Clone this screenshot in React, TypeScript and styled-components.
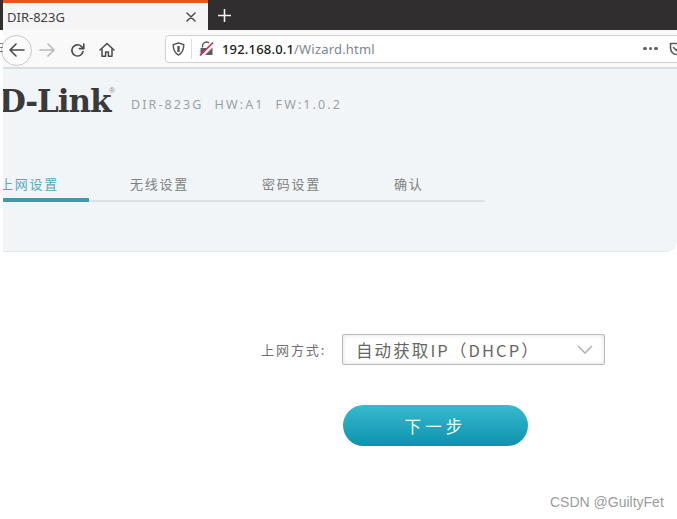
import React from "react";
import styled, { createGlobalStyle } from "styled-components";

const Global = createGlobalStyle`
  html, body { margin: 0; padding: 0; background: #fff; }
  body { width: 677px; height: 519px; overflow: hidden; font-family: "Noto Sans", "Noto Sans CJK SC", sans-serif; }
`;
const cjk = `"Noto Sans CJK SC", "Noto Sans", sans-serif`;

const Page = styled.div`
  position: relative;
  width: 677px;
  height: 519px;
  overflow: hidden;
  background: #fff;
  display: flex;
  flex-direction: column;
`;
const TabStrip = styled.div`
  height: 30px;
  flex: none;
  background: #302e2e;
  padding-left: 3px;
  display: flex;
  align-items: stretch;
`;
const ActiveTab = styled.div`
  width: 205px;
  background: #f5f5f5;
  border-top: 3px solid #e95420;
  box-sizing: border-box;
  display: flex;
  align-items: center;
  justify-content: space-between;
  padding: 0 12px 0 4px;
  font-size: 13px;
  color: #3f3f3f;
`;
const NewTab = styled.div`
  width: 32px;
  display: flex;
  align-items: center;
  justify-content: center;
`;
const Toolbar = styled.div`
  height: 39px;
  flex: none;
  box-sizing: border-box;
  background: #f9f9f9;
  border-bottom: 2px solid #dcdcdc;
  margin-left: 3px;
  padding: 4px 0;
  display: flex;
  align-items: center;
`;
const BackButton = styled.div`
  width: 31px;
  height: 31px;
  flex: none;
  margin-left: -2px;
  margin-top: 3px;
  border-radius: 50%;
  border: 1px solid #c9c9c9;
  background: #fbfbfb;
  box-sizing: border-box;
  display: flex;
  align-items: center;
  justify-content: center;
`;
const NavIcon = styled.div<{ $left: number }>`
  width: 18px;
  height: 18px;
  flex: none;
  margin-left: ${(p) => p.$left}px;
  margin-top: 3px;
  display: flex;
  align-items: center;
  justify-content: center;
`;
const AddressBar = styled.div`
  margin-left: 49px;
  flex: none;
  width: 530px;
  height: 28px;
  box-sizing: border-box;
  background: #fff;
  border: 1px solid #d0d0d0;
  border-radius: 4px;
  display: flex;
  align-items: center;
  padding-left: 6px;
`;
const Sep = styled.div`
  width: 1px;
  height: 20px;
  background: #dcdcdc;
  margin: 0 7px 0 6px;
`;
const Url = styled.div`
  margin-left: 8px;
  font-size: 13px;
  font-family: "Noto Sans", sans-serif;
  color: #7d8790;
  white-space: nowrap;
  width: 421px;
  letter-spacing: 0.18px;
`;
const Host = styled.span`
  color: #17181a;
  font-weight: 500;
`;
const Dots = styled.div`
  display: flex;
  gap: 2px;
`;
const Dot = styled.span`
  width: 3.5px;
  height: 3.5px;
  border-radius: 50%;
  background: #5f5f5f;
`;
const Panel = styled.div`
  height: 183px;
  flex: none;
  box-sizing: border-box;
  margin-left: 3px;
  background: #f1f5f8;
  border-bottom: 1px solid #e3e8ee;
  border-bottom-right-radius: 12px;
  overflow: hidden;
  display: flex;
  flex-direction: column;
`;
const Brand = styled.div`
  display: flex;
  align-items: baseline;
  height: 44px;
  margin-top: 12px;
`;
const Logo = styled.div`
  font-family: "DejaVu Serif", serif;
  font-weight: 700;
  font-size: 31px;
  line-height: 40px;
  letter-spacing: -1.1px;
  color: #3a3a3c;
  margin-left: -4px;
  width: 114px;
  flex: none;
  white-space: nowrap;
  position: relative;
`;
const Reg = styled.span`
  position: absolute;
  left: 110px;
  top: 6px;
  font-family: "Liberation Sans", sans-serif;
  font-size: 8px;
  line-height: 1;
  font-weight: 400;
  letter-spacing: 0;
  color: #8a8a8a;
`;
const Model = styled.div`
  margin-left: 18px;
  font-size: 12.5px;
  letter-spacing: 2.1px;
  word-spacing: 0.2px;
  color: #9b9fa3;
  white-space: pre;
  position: relative;
  top: -3px;
`;
const Steps = styled.div`
  margin-top: 53px;
  width: 482px;
  height: 24px;
  box-sizing: border-box;
  border-bottom: 2px solid #dde1e5;
  display: flex;
  position: relative;
`;
const Step = styled.div<{ $active?: boolean }>`
  width: 132px;
  flex: none;
  box-sizing: border-box;
  font-family: ${cjk};
  font-size: 13px;
  line-height: 12px;
  letter-spacing: 1.75px;
  color: ${(p) => (p.$active ? "#56a9bd" : "#808080")};
  white-space: nowrap;
`;
const FirstStep = styled(Step)`
  margin-left: -3px;
  width: 130px;
`;
const Progress = styled.div`
  position: absolute;
  left: 0;
  bottom: -2px;
  width: 86px;
  height: 4px;
  background: #4299ad;
`;
const Form = styled.div`
  margin-top: 82px;
  padding-left: 261px;
  display: flex;
  flex-direction: column;
`;
const FormRow = styled.div`
  display: flex;
  align-items: center;
`;
const Label = styled.div`
  width: 81px;
  flex: none;
  font-family: ${cjk};
  font-size: 13px;
  letter-spacing: 1.95px;
  color: #6f6f6f;
  white-space: nowrap;
`;
const Select = styled.div`
  width: 263px;
  height: 31px;
  box-sizing: border-box;
  border: 1.5px solid #b8b8b8;
  border-radius: 2px;
  box-shadow: inset 0 0 5px rgba(0, 0, 0, 0.12);
  background: #fff;
  display: flex;
  align-items: center;
  justify-content: space-between;
  padding: 0 11px 0 13px;
  font-family: ${cjk};
  font-size: 16.5px;
  letter-spacing: 2.1px;
  color: #666;
  white-space: nowrap;
`;
const NextButton = styled.button`
  margin: 40px 0 0 82px;
  width: 185px;
  height: 41px;
  border: 0;
  border-radius: 21px;
  background: linear-gradient(180deg, #38bbcd 0%, #0d92af 100%);
  color: #f3fbfc;
  font-family: ${cjk};
  font-size: 16.5px;
  letter-spacing: 4.2px;
  padding: 0;
`;
const Watermark = styled.div`
  position: absolute;
  left: 550px;
  top: 494px;
  font-family: "Liberation Sans", sans-serif;
  font-size: 14px;
  line-height: 16px;
  color: #9b9b9b;
`;
const EdgeGlyph = styled.div`
  position: absolute;
  left: -3px;
  top: 42px;
  width: 6px;
  font-size: 12px;
  line-height: 12px;
  color: #777;
  overflow: hidden;
`;

const stroke = { fill: "none", strokeLinecap: "round", strokeLinejoin: "round" } as const;

export default function App() {
  return (
    <Page>
      <Global />
      <TabStrip>
        <ActiveTab>
          <span>DIR-823G</span>
          <svg width="10" height="10" viewBox="0 0 10 10" {...stroke} stroke="#4a4a4a" strokeWidth="1.5">
            <path d="M1 1l8 8M9 1l-8 8" />
          </svg>
        </ActiveTab>
        <NewTab>
          <svg width="13" height="13" viewBox="0 0 13 13" stroke="#f2f2f2" strokeWidth="1.6" fill="none">
            <path d="M6.5 0v13M0 6.5h13" />
          </svg>
        </NewTab>
      </TabStrip>
      <Toolbar>
        <BackButton>
          <svg width="16" height="14" viewBox="0 0 16 14" {...stroke} stroke="#4a4a4a" strokeWidth="1.6">
            <path d="M15 7H1.5M7 1L1 7l6 6" />
          </svg>
        </BackButton>
        <NavIcon $left={6}>
          <svg width="16" height="14" viewBox="0 0 16 14" {...stroke} stroke="#b8b8b8" strokeWidth="1.5">
            <path d="M1 7h13.5M9 1l6 6-6 6" />
          </svg>
        </NavIcon>
        <NavIcon $left={12}>
          <svg width="15" height="15" viewBox="0 0 15 15" {...stroke} stroke="#4a4a4a" strokeWidth="1.6">
            <path d="M13 8.5A5.6 5.6 0 1 1 11.3 3.3L13.6 5.4" />
            <path d="M13.8 1v4.6H9.4" />
          </svg>
        </NavIcon>
        <NavIcon $left={12}>
          <svg width="16" height="16" viewBox="0 0 16 16" {...stroke} stroke="#4a4a4a" strokeWidth="1.5">
            <path d="M1 8l7-6.5L15 8" />
            <path d="M3 7v7.2h3.6V10h2.8v4.2H13V7" />
          </svg>
        </NavIcon>
        <AddressBar>
          <svg width="13" height="14" viewBox="0 0 13 14" fill="none" stroke="#555" strokeWidth="1.5" strokeLinejoin="round">
            <path d="M6.5 1L1.2 2.6c0 4.8 1 8.3 5.3 10.4 4.3-2.1 5.3-5.6 5.3-10.4z" />
            <path d="M6.5 4v6" strokeWidth="2.4" />
          </svg>
          <Sep />
          <svg width="15" height="15" viewBox="0 0 15 15" fill="none">
            <path d="M1.5 14V7h7zM13.5 6.5V14H6z" fill="#5c5c5c" />
            <path d="M3.5 6.5V4.8a4 4 0 0 1 6.5-2.8" stroke="#555" strokeWidth="1.4" />
            <path d="M1 14.5L14 1.5" stroke="#e22850" strokeWidth="1.7" />
          </svg>
          <Url>
            <Host>192.168.0.1</Host>/Wizard.html
          </Url>
          <Dots>
            <Dot />
            <Dot />
            <Dot />
          </Dots>
          <svg style={{ marginLeft: 11, flex: "none" }} width="15" height="14" viewBox="0 0 15 14" fill="none" stroke="#5a5a5a" strokeWidth="1.6" strokeLinecap="round" strokeLinejoin="round">
            <path d="M1.5 1.5h12V6c0 4-3 6.5-6 6.5S1.5 10 1.5 6z" />
            <path d="M4.5 5.5l3 3 3-3" />
          </svg>
        </AddressBar>
      </Toolbar>
      <EdgeGlyph>E</EdgeGlyph>
      <Panel>
        <Brand>
          <Logo>
            D-Link<Reg>®</Reg>
          </Logo>
          <Model>{"DIR-823G  HW:A1  FW:1.0.2"}</Model>
        </Brand>
        <Steps>
          <FirstStep $active>上网设置</FirstStep>
          <Step>无线设置</Step>
          <Step>密码设置</Step>
          <Step>确认</Step>
          <Progress />
        </Steps>
      </Panel>
      <Form>
        <FormRow>
          <Label>上网方式:</Label>
          <Select>
            <span>自动获取IP（DHCP）</span>
            <svg width="16" height="9" viewBox="0 0 16 9" fill="none" stroke="#aeb2b5" strokeWidth="1.5">
              <path d="M1 1l7 7 7-7" />
            </svg>
          </Select>
        </FormRow>
        <NextButton>下一步</NextButton>
      </Form>
      <Watermark>CSDN @GuiltyFet</Watermark>
    </Page>
  );
}
